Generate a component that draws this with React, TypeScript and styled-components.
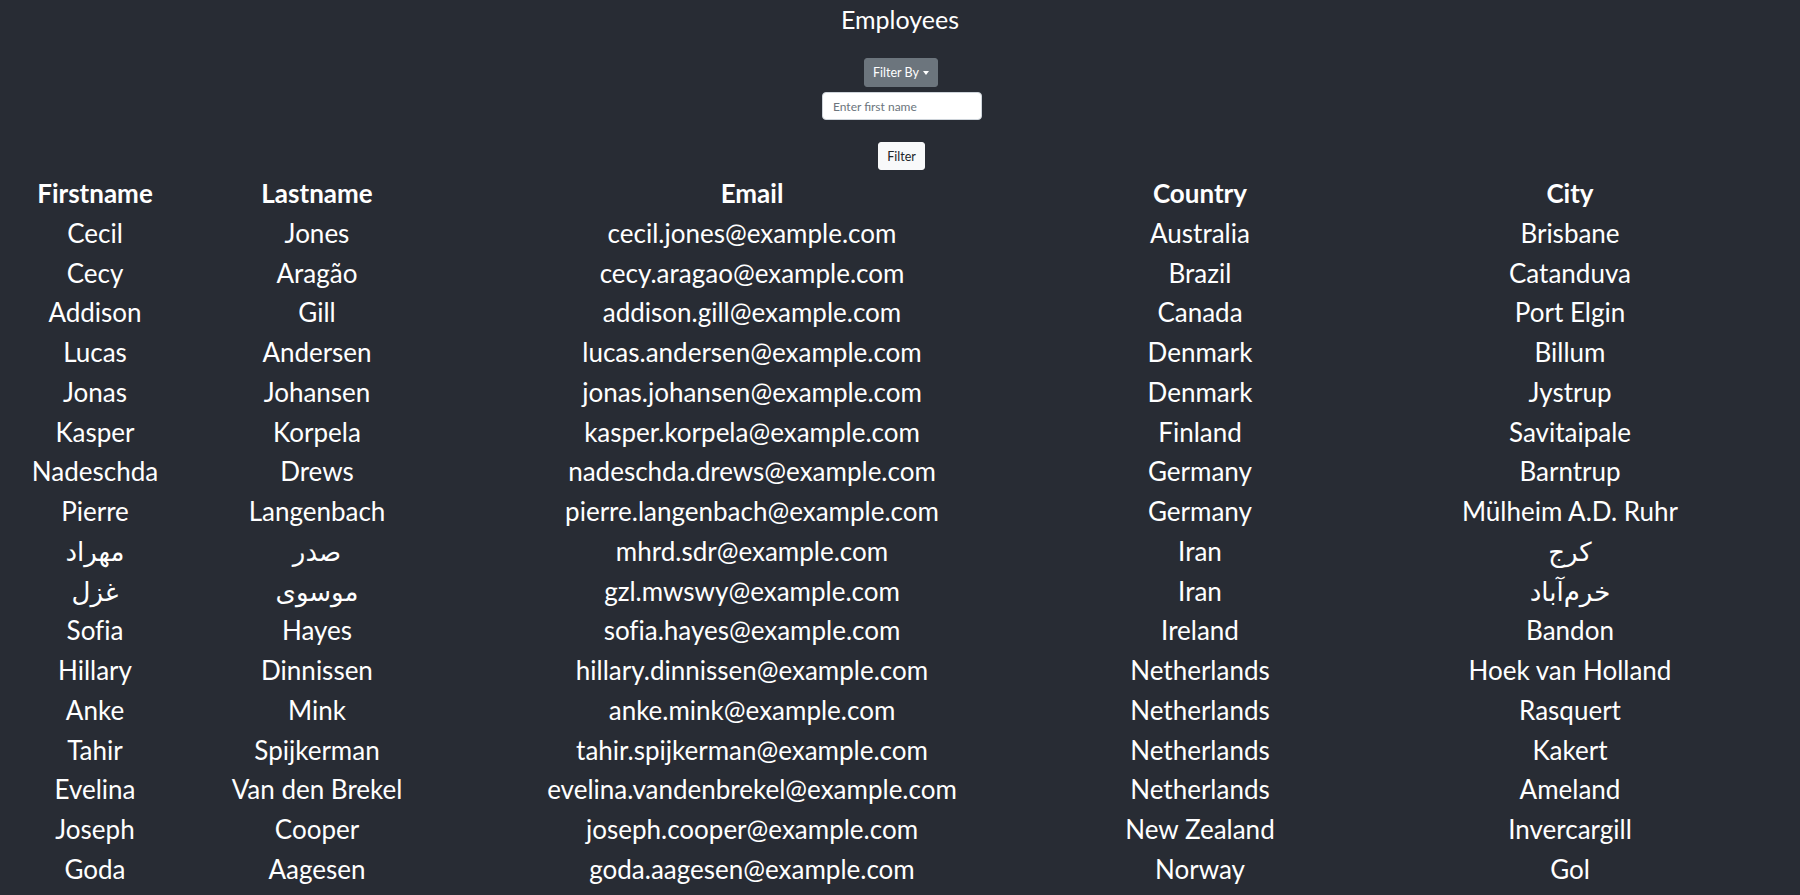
import React from "react";
import styled, { createGlobalStyle } from "styled-components";

const Global = createGlobalStyle`
  html, body { margin: 0; padding: 0; background: #282c34; }
  body {
    font-family: Lato, "Open Sans", "DejaVu Sans", sans-serif;
    font-variant-ligatures: none;
  }
`;

const Page = styled.div`
  min-height: 100vh;
  background: #282c34;
  color: #ffffff;
  display: flex;
  flex-direction: column;
  align-items: center;
`;

const Title = styled.h1`
  margin: 3px 0 0;
  font-size: 25px;
  line-height: 32px;
  font-weight: 400;
`;

const Controls = styled.div`
  display: flex;
  flex-direction: column;
  align-items: center;
`;

const DropdownButton = styled.button`
  margin-top: 23px;
  margin-left: 2px;
  height: 29px;
  padding: 0 8px;
  border: 1px solid #6c757d;
  border-radius: 3px;
  background: #6c757d;
  color: #ffffff;
  font-family: inherit;
  font-size: 12.5px;
  display: inline-flex;
  align-items: center;
  &::after {
    content: "";
    display: inline-block;
    margin-left: 4px;
    border-top: 4px solid #ffffff;
    border-left: 3.5px solid transparent;
    border-right: 3.5px solid transparent;
  }
`;

const NameInput = styled.input`
  margin-top: 5px;
  margin-left: 4px;
  width: 160px;
  height: 28px;
  box-sizing: border-box;
  padding: 0 10px;
  border: 1px solid #ced4da;
  border-radius: 4px;
  background: #ffffff;
  font-family: inherit;
  font-size: 12px;
  color: #495057;
  &::placeholder { color: #6c757d; }
`;

const LightButton = styled.button`
  margin-top: 22px;
  margin-left: 3px;
  height: 28px;
  width: 47px;
  padding: 0;
  border: 1px solid #f8f9fa;
  border-radius: 3px;
  background: #f8f9fa;
  color: #212529;
  font-family: inherit;
  font-size: 12.5px;
`;

const Table = styled.table`
  margin-top: 4px;
  width: 100%;
  table-layout: fixed;
  border-collapse: collapse;
  font-size: 26px;
`;

const Th = styled.th`
  padding: 0;
  height: 39.75px;
  line-height: 39.75px;
  font-weight: 700;
  text-align: center;
  white-space: nowrap;
`;

const Td = styled.td`
  padding: 0;
  height: 39.75px;
  line-height: 39.75px;
  text-align: center;
  white-space: nowrap;
`;

const employees: [string, string, string, string, string][] = [
  ["Cecil", "Jones", "cecil.jones@example.com", "Australia", "Brisbane"],
  ["Cecy", "Aragão", "cecy.aragao@example.com", "Brazil", "Catanduva"],
  ["Addison", "Gill", "addison.gill@example.com", "Canada", "Port Elgin"],
  ["Lucas", "Andersen", "lucas.andersen@example.com", "Denmark", "Billum"],
  ["Jonas", "Johansen", "jonas.johansen@example.com", "Denmark", "Jystrup"],
  ["Kasper", "Korpela", "kasper.korpela@example.com", "Finland", "Savitaipale"],
  ["Nadeschda", "Drews", "nadeschda.drews@example.com", "Germany", "Barntrup"],
  ["Pierre", "Langenbach", "pierre.langenbach@example.com", "Germany", "Mülheim A.D. Ruhr"],
  ["مهراد", "صدر", "mhrd.sdr@example.com", "Iran", "کرج"],
  ["غزل", "موسوی", "gzl.mwswy@example.com", "Iran", "خرم‌آباد"],
  ["Sofia", "Hayes", "sofia.hayes@example.com", "Ireland", "Bandon"],
  ["Hillary", "Dinnissen", "hillary.dinnissen@example.com", "Netherlands", "Hoek van Holland"],
  ["Anke", "Mink", "anke.mink@example.com", "Netherlands", "Rasquert"],
  ["Tahir", "Spijkerman", "tahir.spijkerman@example.com", "Netherlands", "Kakert"],
  ["Evelina", "Van den Brekel", "evelina.vandenbrekel@example.com", "Netherlands", "Ameland"],
  ["Joseph", "Cooper", "joseph.cooper@example.com", "New Zealand", "Invercargill"],
  ["Goda", "Aagesen", "goda.aagesen@example.com", "Norway", "Gol"],
];

const widths = [190, 254, 616, 280, 460];

export default function App() {
  return (
    <>
      <Global />
      <Page>
        <Title>Employees</Title>
        <Controls>
          <DropdownButton type="button">Filter By</DropdownButton>
          <NameInput placeholder="Enter first name" />
          <LightButton type="button">Filter</LightButton>
        </Controls>
        <Table>
          <colgroup>
            {widths.map((w, i) => (
              <col key={i} style={{ width: w }} />
            ))}
          </colgroup>
          <thead>
            <tr>
              <Th>Firstname</Th>
              <Th>Lastname</Th>
              <Th>Email</Th>
              <Th>Country</Th>
              <Th>City</Th>
            </tr>
          </thead>
          <tbody>
            {employees.map((e) => (
              <tr key={e[2]}>
                {e.map((v, i) => (
                  <Td key={i}>{v}</Td>
                ))}
              </tr>
            ))}
          </tbody>
        </Table>
      </Page>
    </>
  );
}
